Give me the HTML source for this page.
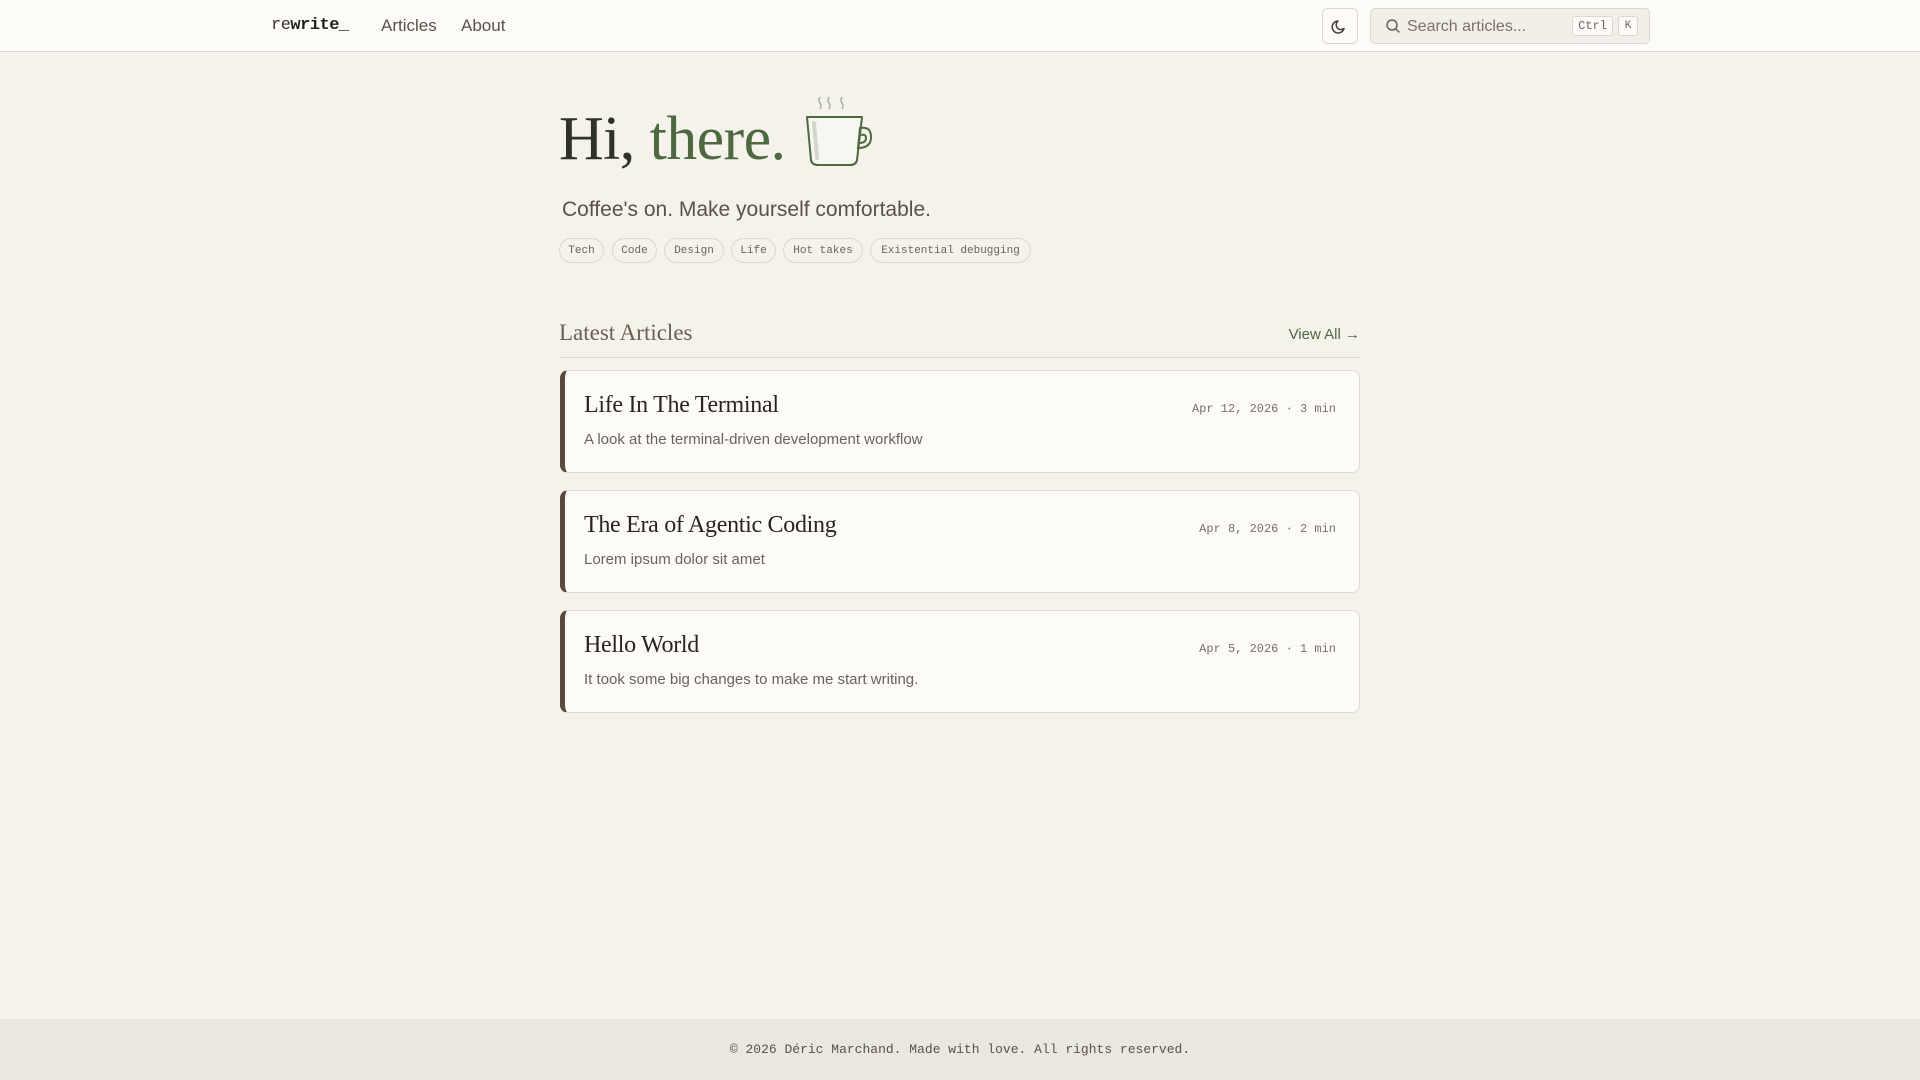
<!DOCTYPE html>
<html><head><meta charset="utf-8"><style>
*{box-sizing:border-box;margin:0;padding:0}
body{width:1920px;height:1080px;background:#f5f2ec;font-family:"Liberation Sans",sans-serif;color:#3a332c;position:relative;overflow:hidden}
.hdr{position:absolute;top:0;left:0;width:1920px;height:52px;background:#fcfbf8;border-bottom:1px solid #ddd7cd}
.mono{font-family:"Liberation Mono",monospace}
.abs{position:absolute}
.tag{position:absolute;top:238px;height:25px;border:1px solid #ddd7cd;border-radius:13px;font-family:"Liberation Mono",monospace;font-size:11px;color:#6b635a;line-height:24px;text-align:center}
.card{position:absolute;left:560px;width:800px;height:103px;background:#fcfbf8;border:1px solid #e0dbd2;border-left:5px solid #5a4a3e;border-radius:8px}
.card h3{position:absolute;left:19px;top:21px;font-family:"Liberation Serif",serif;font-weight:normal;font-size:24px;color:#2a241f;letter-spacing:-0.3px}
.card p{position:absolute;left:19px;top:60px;font-size:15px;color:#6b635a}
.card .d{position:absolute;right:23px;top:31px;font-family:"Liberation Mono",monospace;font-size:12px;color:#7a7168}
</style></head><body>
<div class="hdr">
<div class="abs mono" style="left:271px;top:16px;font-size:17px;color:#3a332c;letter-spacing:-0.5px">re<b style="color:#222">write</b>_</div>
<div class="abs" style="left:381px;top:16px;font-size:17px;color:#5a5148">Articles</div>
<div class="abs" style="left:461px;top:16px;font-size:17px;color:#5a5148">About</div>
<div class="abs" style="left:1322px;top:8px;width:36px;height:36px;border:1px solid #ddd7cd;border-radius:5px;background:#fcfbf8">
<svg width="34" height="34" viewBox="0 0 34 34" style="position:absolute;left:0;top:0"><path d="M21 19.5A6 6 0 1 1 15 12a4.7 4.7 0 0 0 6 7.5z" fill="none" stroke="#4a4038" stroke-width="1.5" stroke-linejoin="round"/></svg></div>
<div class="abs" style="left:1370px;top:8px;width:280px;height:36px;border:1px solid #ddd7cd;border-radius:5px;background:#f3efe8">
<svg width="20" height="20" viewBox="0 0 20 20" style="position:absolute;left:12px;top:7px"><circle cx="9" cy="9" r="5" fill="none" stroke="#6b635a" stroke-width="1.5"/><path d="M12.7 12.7L16 16" stroke="#6b635a" stroke-width="1.5" stroke-linecap="round"/></svg>
<div class="abs" style="left:36px;top:9px;font-size:16px;color:#7a7168">Search articles...</div>
<div class="abs mono" style="left:201px;top:7px;width:41px;height:20px;border:1px solid #ddd7cd;border-radius:3px;background:#fcfbf8;font-size:12px;line-height:18px;text-align:center;color:#6b635a">Ctrl</div>
<div class="abs mono" style="left:247px;top:7px;width:20px;height:20px;border:1px solid #ddd7cd;border-radius:3px;background:#fcfbf8;font-size:11px;line-height:18px;text-align:center;color:#6b635a">K</div>
</div></div>

<div class="abs" style="left:559px;top:104px;font-family:'Liberation Serif',serif;font-size:62px;color:#2f3325;letter-spacing:-0.6px">Hi, <span style="color:#4e6840">there.</span></div>
<svg class="abs" style="left:800px;top:90px" width="90" height="90" viewBox="0 0 90 90">
<path d="M7 27L62 27 57 70Q56 75 50 75H18Q12 75 11 70Z" fill="#f8f6f1" stroke="#4e6840" stroke-width="2" stroke-linejoin="round"/>
<path d="M14 33L17 68" stroke="#d3d6cc" stroke-width="4" stroke-linecap="round"/>
<path d="M60 38Q71 36 71 47Q71 58 58 58Z M61 45Q66 44 66 48Q66 53 59 53" fill="none" stroke="#4e6840" stroke-width="2"/>
<path d="M20 7q-2 3 0 6q2 3 0 6M29 7q-2 3 0 6q2 3 0 6M42 7q-2 3 0 6q2 3 0 6" fill="none" stroke="#a8b4a0" stroke-width="1.6"/>
</svg>
<div class="abs" style="left:562px;top:198px;font-size:21px;color:#5a5148">Coffee's on. Make yourself comfortable.</div>
<div class="tag" style="left:559px;width:45px">Tech</div>
<div class="tag" style="left:612px;width:45px">Code</div>
<div class="tag" style="left:664px;width:60px">Design</div>
<div class="tag" style="left:731px;width:45px">Life</div>
<div class="tag" style="left:783px;width:80px">Hot takes</div>
<div class="tag" style="left:870px;width:161px">Existential debugging</div>

<div class="abs" style="left:559px;top:320px;font-family:'Liberation Serif',serif;font-size:23px;color:#6b5f52;letter-spacing:0px">Latest Articles</div>
<div class="abs" style="right:560px;top:326px;font-size:15px;color:#4e6840">View All →</div>
<div class="abs" style="left:560px;top:357px;width:800px;height:1px;background:#ddd7cd"></div>

<div class="card" style="top:370px"><h3>Life In The Terminal</h3><p>A look at the terminal-driven development workflow</p><div class="d">Apr 12, 2026 · 3 min</div></div>
<div class="card" style="top:490px"><h3>The Era of Agentic Coding</h3><p>Lorem ipsum dolor sit amet</p><div class="d">Apr 8, 2026 · 2 min</div></div>
<div class="card" style="top:610px"><h3>Hello World</h3><p>It took some big changes to make me start writing.</p><div class="d">Apr 5, 2026 · 1 min</div></div>

<div class="abs" style="left:0;top:1019px;width:1920px;height:61px;background:#ebe7e0;text-align:center;font-family:'Liberation Mono',monospace;font-size:13px;color:#5a5148;line-height:61px">© 2026 Déric Marchand. Made with love. All rights reserved.</div>
</body></html>
